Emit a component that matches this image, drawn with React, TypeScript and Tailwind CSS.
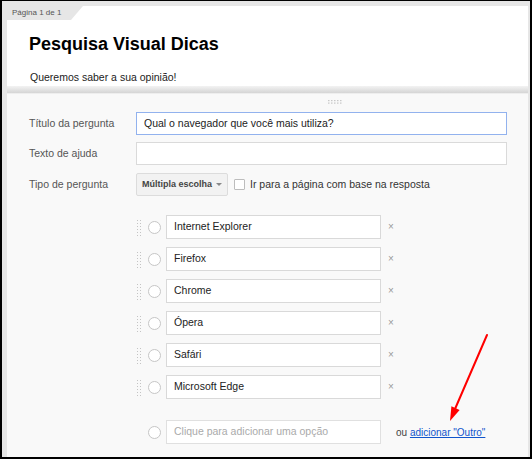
import type { ReactNode } from 'react'

const options = ['Internet Explorer', 'Firefox', 'Chrome', 'Ópera', 'Safári', 'Microsoft Edge']

function Grip() {
  return (
    <svg width="7" height="17" viewBox="0 0 7 17" className="shrink-0">
      {[0, 1, 2, 3, 4, 5].map((r) => (
        <g key={r} fill="#c4c4c4">
          <rect x="1" y={1 + r * 3} width="1" height="1" />
          <rect x="4" y={1 + r * 3} width="1" height="1" />
        </g>
      ))}
    </svg>
  )
}

function Radio() {
  return <div className="w-[13px] h-[13px] rounded-full border border-[#c6c6c6] bg-white shrink-0" />
}

function Field({ label, children }: { label: string; children: ReactNode }) {
  return (
    <div className="flex items-center">
      <div className="w-[107px] shrink-0 text-[10.5px] text-[#555]">{label}</div>
      {children}
    </div>
  )
}

export default function App() {
  return (
    <div className="relative w-[532px] h-[459px] overflow-hidden border-t border-l-2 border-r-2 border-b-2 border-black bg-[#e6e6e6] pt-[5px] pl-[5px] pr-[2px] flex flex-col font-['Liberation_Sans',Arial,sans-serif]">
      <div className="flex-1 bg-white flex flex-col">
        {/* Page tab */}
        <div className="h-[14px] w-[76px] bg-[#e6e6e6] pl-[5px] text-[8px] leading-[14px] text-[#555] [clip-path:polygon(0_0,100%_0,calc(100%-12px)_100%,0_100%)]">
          Página 1 de 1
        </div>

        {/* Header */}
        <h1 className="pl-[22px] mt-[13px] text-[18px] leading-[22px] font-bold text-black">Pesquisa Visual Dicas</h1>
        <p className="pl-[23px] mt-[16px] text-[10.5px] leading-[13px] text-[#222]">Queremos saber a sua opinião!</p>

        <div className="mt-[2px] h-[7px] bg-[linear-gradient(to_bottom,#f3f3f3,#d5d5d5)]" />

        {/* Edit panel */}
        <div className="flex-1 bg-[#f9f9f9] border-t border-[#eeeeee] px-[22px]">
          <div className="pl-[299px] pt-[6px]">
            <svg width="16" height="4" viewBox="0 0 16 4">
              {[0, 1, 2, 3, 4].map((i) => (
                <g key={i} fill="#c8c8c8">
                  <rect x={i * 3} y="0" width="1.5" height="1.2" />
                  <rect x={i * 3} y="2.5" width="1.5" height="1.2" />
                </g>
              ))}
            </svg>
          </div>

          <div className="mt-[8px] flex flex-col gap-[7px]">
            <Field label="Título da pergunta">
              <div className="flex-1 h-[23px] mr-[-1px] border border-[#92b2ee] bg-white pl-[7px] flex items-center text-[10.5px] text-[#222]">
                Qual o navegador que você mais utiliza?
              </div>
            </Field>
            <Field label="Texto de ajuda">
              <div className="flex-1 h-[23px] mr-[-1px] border border-[#dadada] bg-white" />
            </Field>
            <div className="mt-[1px]">
              <Field label="Tipo de pergunta">
                <div className="h-[23px] w-[92px] flex items-center justify-between px-[5px] border border-[#dcdcdc] rounded-[2px] bg-[#f2f2f2] text-[9px] font-bold text-[#444]">
                  Múltipla escolha
                  <svg width="6" height="3" viewBox="0 0 6 3">
                    <path d="M0 0h6L3 3z" fill="#888" />
                  </svg>
                </div>
                <div className="ml-[6px] w-[11px] h-[11px] border border-[#bdbdbd] bg-white rounded-[1px]" />
                <span className="ml-[5px] text-[10.5px] text-[#333]">Ir para a página com base na resposta</span>
              </Field>
            </div>
          </div>

          {/* Options */}
          <div className="mt-[19px] pl-[107px] flex flex-col gap-[8px]">
            {options.map((opt) => (
              <div key={opt} className="flex items-center h-[24px]">
                <Grip />
                <div className="ml-[5px]">
                  <Radio />
                </div>
                <div className="ml-[5px] w-[215px] h-[24px] border border-[#d9d9d9] bg-white pl-[7px] flex items-center text-[10.5px] text-[#222]">
                  {opt}
                </div>
                <span className="ml-[7px] text-[10px] text-[#999] leading-none">×</span>
              </div>
            ))}
          </div>

          <div className="mt-[21px] pl-[107px] flex items-center h-[24px]">
            <div className="ml-[12px]">
              <Radio />
            </div>
            <div className="ml-[5px] w-[215px] h-[24px] border border-[#e0e0e0] bg-white pl-[7px] flex items-center text-[10.5px] text-[#aaa]">
              Clique para adicionar uma opção
            </div>
            <span className="ml-[15px] text-[10px] text-[#444]">
              ou <span className="text-[#1155cc] underline">adicionar &quot;Outro&quot;</span>
            </span>
          </div>
        </div>
      </div>

      {/* Red annotation arrow */}
      <svg className="absolute left-[-2px] top-[-1px] pointer-events-none" width="532" height="459" viewBox="0 0 532 459">
        <line x1="487" y1="335" x2="455" y2="409" stroke="#ff0000" strokeWidth="2" strokeLinecap="round" />
        <polygon points="450,421 451.4,406.3 459.6,409.9" fill="#ff0000" />
      </svg>
    </div>
  )
}
